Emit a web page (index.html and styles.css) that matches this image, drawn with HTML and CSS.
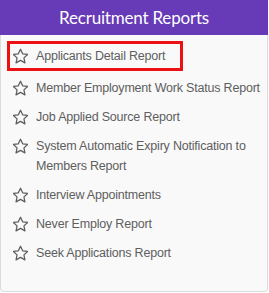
FILE: index.html
```html
<!DOCTYPE html>
<html lang="en">
<head>
    <meta charset="UTF-8">
    <meta name="viewport" content="width=device-width, initial-scale=1.0">
    <title>Recruitment Reports</title>
    <link rel="stylesheet" href="styles.css">
</head>
<body>
    <div class="panel">
        <div class="panel-title">Recruitment Reports</div>

        <!-- Report links -->
        <ul class="report-list">
            <li class="report active">
                <svg class="star" viewBox="2 1.5 20 20"><path d="M12 2.5l2.9 6.1 6.6.8-4.9 4.6 1.3 6.6L12 17.3l-5.9 3.3 1.3-6.6-4.9-4.6 6.6-.8z"/></svg>
                <span>Applicants Detail Report</span>
            </li>
            <li class="report">
                <svg class="star" viewBox="2 1.5 20 20"><path d="M12 2.5l2.9 6.1 6.6.8-4.9 4.6 1.3 6.6L12 17.3l-5.9 3.3 1.3-6.6-4.9-4.6 6.6-.8z"/></svg>
                <span>Member Employment Work Status Report</span>
            </li>
            <li class="report">
                <svg class="star" viewBox="2 1.5 20 20"><path d="M12 2.5l2.9 6.1 6.6.8-4.9 4.6 1.3 6.6L12 17.3l-5.9 3.3 1.3-6.6-4.9-4.6 6.6-.8z"/></svg>
                <span>Job Applied Source Report</span>
            </li>
            <li class="report">
                <svg class="star" viewBox="2 1.5 20 20"><path d="M12 2.5l2.9 6.1 6.6.8-4.9 4.6 1.3 6.6L12 17.3l-5.9 3.3 1.3-6.6-4.9-4.6 6.6-.8z"/></svg>
                <span>System Automatic Expiry Notification to Members Report</span>
            </li>
            <li class="report">
                <svg class="star" viewBox="2 1.5 20 20"><path d="M12 2.5l2.9 6.1 6.6.8-4.9 4.6 1.3 6.6L12 17.3l-5.9 3.3 1.3-6.6-4.9-4.6 6.6-.8z"/></svg>
                <span>Interview Appointments</span>
            </li>
            <li class="report">
                <svg class="star" viewBox="2 1.5 20 20"><path d="M12 2.5l2.9 6.1 6.6.8-4.9 4.6 1.3 6.6L12 17.3l-5.9 3.3 1.3-6.6-4.9-4.6 6.6-.8z"/></svg>
                <span>Never Employ Report</span>
            </li>
            <li class="report">
                <svg class="star" viewBox="2 1.5 20 20"><path d="M12 2.5l2.9 6.1 6.6.8-4.9 4.6 1.3 6.6L12 17.3l-5.9 3.3 1.3-6.6-4.9-4.6 6.6-.8z"/></svg>
                <span>Seek Applications Report</span>
            </li>
        </ul>
    </div>
</body>
</html>
```
FILE: styles.css
```css
body {
    margin: 0;
    font-family: "Liberation Sans", Arial, sans-serif;
    background: #ffffff;
}
.panel {
    width: 268px;
    height: 292px;
    background: #f9f9f9;
    border: 1px solid #dcdcdc;
    border-top: none;
    border-radius: 0 0 4px 4px;
    box-sizing: border-box;
}
.panel-title {
    height: 35px;
    line-height: 36px;
    background: #673ab7;
    color: #ffffff;
    font-family: Lato, "Liberation Sans", sans-serif;
    font-size: 17px;
    letter-spacing: -0.2px;
    text-align: center;
    margin: 0 -1px 0 -1px;
}
.report-list {
    list-style: none;
    margin: 0;
    padding: 6px 0 0 6px;
}
.report {
    display: flex;
    align-items: flex-start;
    gap: 8px;
    width: fit-content;
    padding: 1.5px 0 1.5px 3px;
    border: 3px solid transparent;
    color: #5e5e5e;
    font-size: 12.5px;
    letter-spacing: -0.2px;
    line-height: 20px;
    cursor: pointer;
}
.report.active {
    padding: 2px 15px 2px 3px;
    margin-bottom: 2px;
    border-color: #ee1111;
}
.star {
    flex: none;
    width: 15px;
    height: 20px;
    fill: none;
    stroke: #5e5e5e;
    stroke-width: 1.7;
    stroke-linejoin: round;
}
```
